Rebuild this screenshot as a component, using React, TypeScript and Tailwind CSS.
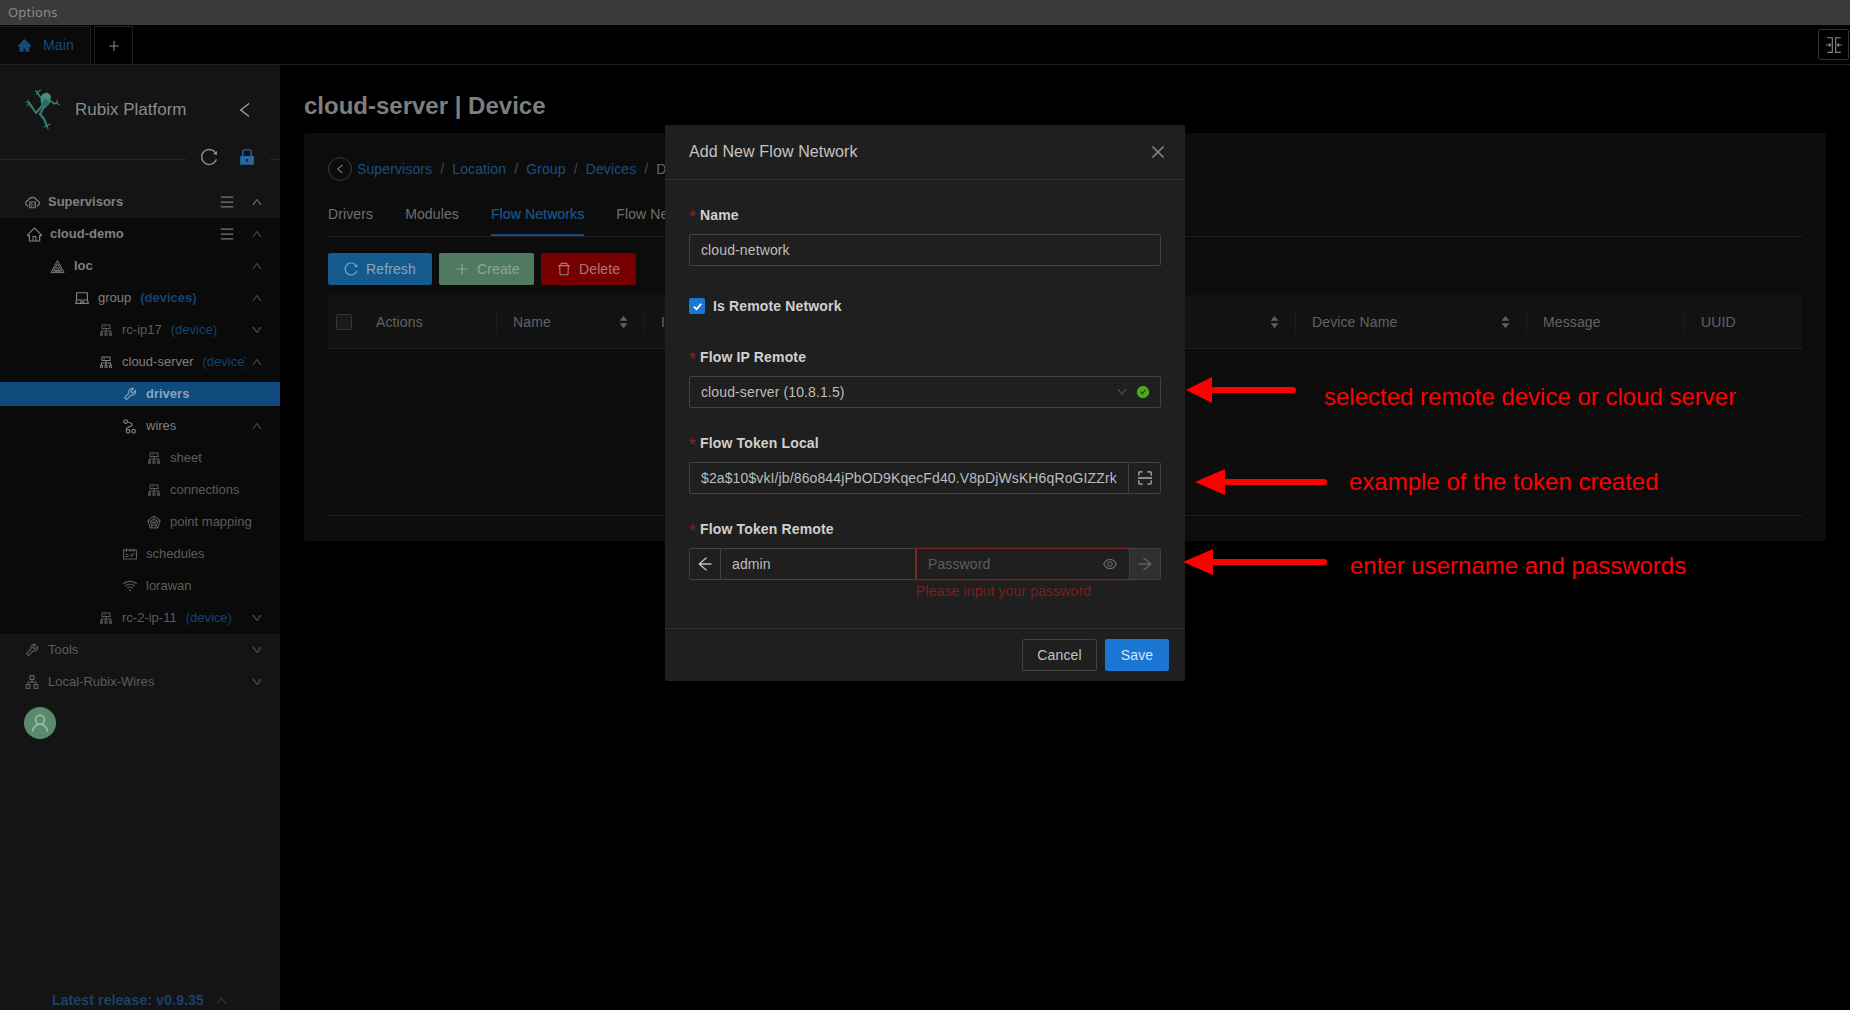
import type { ReactNode } from "react";
import {
  AiFillCheckCircle,
  AiFillHome,
  AiFillLock,
  AiOutlineApartment,
  AiOutlineArrowLeft,
  AiOutlineArrowRight,
  AiOutlineClose,
  AiOutlineCloudServer,
  AiOutlineCluster,
  AiOutlineDelete,
  AiOutlineDown,
  AiOutlineEye,
  AiOutlineHome,
  AiOutlineLaptop,
  AiOutlineLeft,
  AiOutlineMenu,
  AiOutlinePlus,
  AiOutlineRadarChart,
  AiOutlineReload,
  AiOutlineScan,
  AiOutlineSchedule,
  AiOutlineTool,
  AiOutlineUp,
  AiOutlineUser,
  AiOutlineWifi,
} from "react-icons/ai";

const indents: Record<number, string> = {
  [-1]: "pl-[24px]",
  0: "pl-[26px]",
  1: "pl-[50px]",
  2: "pl-[74px]",
  3: "pl-[98px]",
  4: "pl-[122px]",
  5: "pl-[146px]",
};

function FrogLogo() {
  return (
    <svg viewBox="0 0 60 60" className="h-[60px] w-[60px]" fill="#357d74" stroke="#357d74" strokeLinejoin="round" strokeLinecap="round">
      <path d="M27.5 14 L32.5 12.5 L36 16 L35 23 L30.5 28 L26 24 L25.5 18 Z" stroke="none" fill="#42907f" />
      <path d="M30 18 L35 23 L30.5 28 L26 24 Z" stroke="none" fill="#2b6b63" />
      <g fill="none" strokeWidth="1.6">
        <path d="M27 19 L24 15.5 L22.5 11.5" />
        <path d="M20 11 L23 12 L25.5 10 M22.5 11.5 L21.5 14.5" strokeWidth="1.1" />
        <path d="M34.5 20 L39 23.5 L42 23" />
        <path d="M42.5 20 L41.5 23 L44.5 25 M39 24 L42 23" strokeWidth="1.1" />
        <path d="M27 26 L21 33 L17 27 L14 23" strokeWidth="2.2" />
        <path d="M11 22 L14 23 L13 20 M14 23 L12 26" strokeWidth="1.1" />
        <path d="M29 27 L25 34 L29 39 L32 46" strokeWidth="2.2" />
        <path d="M29 47 L32 46 L35 44 M32 46 L33 49" strokeWidth="1.1" />
      </g>
    </svg>
  );
}

function PyramidIcon() {
  return (
    <svg viewBox="0 0 16 16" className="h-[15px] w-[15px]" fill="none" stroke="currentColor" strokeWidth="1">
      <path d="M8 1.5 L15 14.5 H1 Z" />
      <path d="M8 5 L12.5 13 H3.5 Z" />
      <path d="M8 8.5 L10.3 12.5 H5.7 Z" />
    </svg>
  );
}

function WiresIcon() {
  return (
    <svg viewBox="0 0 14 14" className="h-[15px] w-[15px]" fill="none" stroke="currentColor" strokeWidth="1.1">
      <circle cx="3.4" cy="2.4" r="1.7" />
      <circle cx="10.8" cy="11.4" r="1.7" />
      <circle cx="5.6" cy="11.4" r="1.7" />
      <path d="M5 2.8 C9.5 3.2 10.5 5.2 8.6 6.6 C7 7.6 4 7.4 3.6 9.6" />
    </svg>
  );
}

function PanelIcon() {
  return (
    <svg viewBox="0 0 16 16" className="h-[18px] w-[18px]" fill="none" stroke="currentColor" strokeWidth="1">
      <path d="M2 1.5 H6.5 V14.5 H2 M14 1.5 H9.5 V14.5 H14" />
      <path d="M1 8 H5 M3.6 6.6 L5 8 L3.6 9.4 M15 8 H11 M12.4 6.6 L11 8 L12.4 9.4" />
    </svg>
  );
}

function SortCarets() {
  return (
    <svg viewBox="0 0 10 16" className="h-[14px] w-[9px]" fill="#5e5e5e">
      <path d="M5 1 L9.5 6.5 H0.5 Z M5 15 L0.5 9.5 H9.5 Z" />
    </svg>
  );
}

function Arrow({ className, width, head }: { className: string; width: number; head: number }) {
  return (
    <svg viewBox={`0 0 ${width} 26`} width={width} height={26} className={className}>
      <path d={`M0 13 L${head} 0 V26 Z`} fill="#ff0000" />
      <path d={`M${head - 1} 13 H${width - 3}`} stroke="#ff0000" strokeWidth="6" strokeLinecap="round" />
    </svg>
  );
}

interface MenuRowProps {
  depth: number;
  icon: ReactNode;
  label: string;
  tag?: string;
  tagBold?: boolean;
  chevron?: "up" | "down";
  chevronDim?: boolean;
  menu?: boolean;
  bold?: boolean;
  dim?: boolean;
  active?: boolean;
}

function MenuRow({ depth, icon, label, tag, tagBold, chevron, chevronDim, menu, bold, dim, active }: MenuRowProps) {
  const color = active ? "text-[#8ba4bb]" : dim ? "text-[#5c5c5c]" : "text-[#808080]";
  return (
    <div className="flex h-8 items-center">
      <div className={`flex h-6 w-full items-center pr-[17px] ${indents[depth]} ${active ? "bg-[#0e4a7c]" : ""}`}>
        <span className={`flex w-6 shrink-0 items-center text-[16px] ${color}`}>{icon}</span>
        <span className={`flex min-w-0 flex-1 overflow-hidden whitespace-nowrap text-[13px] tracking-normal ${bold ? "font-bold" : ""} ${color}`}>
          {label}
          {tag && <span className={`ml-[9px] text-[#15436d] ${tagBold ? "font-bold" : ""}`}>{tag}</span>}
        </span>
        {menu && <AiOutlineMenu className="mr-[11px] shrink-0 text-[16px] text-[#787878]" />}
        {chevron === "up" && <AiOutlineUp className={`ml-[5px] shrink-0 text-[12px] ${chevronDim ? "text-[#4f4f4f]" : "text-[#808080]"}`} />}
        {chevron === "down" && <AiOutlineDown className="ml-[5px] shrink-0 text-[12px] text-[#5c5c5c]" />}
      </div>
    </div>
  );
}

function Sidebar() {
  return (
    <aside className="flex w-[280px] shrink-0 flex-col overflow-hidden bg-[#141414]">
      <div className="flex h-[78px] items-center pl-[15px] pr-[25px] pt-[11px]">
        <FrogLogo />
        <span className="flex-1 text-[17px] tracking-normal text-[#8a8a8a]">Rubix Platform</span>
        <AiOutlineLeft className="text-[20px] text-[#909090]" />
      </div>
      <div className="flex h-[32px] items-center">
        <div className="h-px w-[186px] bg-[#262626]" />
        <AiOutlineReload className="ml-[13px] -mt-[4px] text-[20px] text-[#8a8a8a]" />
        <AiFillLock className="ml-[18px] -mt-[4px] text-[20px] text-[#2768a0]" />
        <div className="ml-[13px] h-px flex-1 bg-[#262626]" />
      </div>
      <div className="h-[11px]" />
      <MenuRow depth={-1} icon={<AiOutlineCloudServer className="text-[17px]" />} label="Supervisors" bold menu chevron="up" />
      <div className="bg-[#0a0a0a]">
        <MenuRow depth={0} icon={<AiOutlineHome className="text-[17px]" />} label="cloud-demo" bold menu chevron="up" chevronDim />
        <MenuRow depth={1} icon={<PyramidIcon />} label="loc" bold chevron="up" chevronDim />
        <MenuRow depth={2} icon={<AiOutlineLaptop />} label="group" tag="(devices)" tagBold chevron="up" chevronDim />
        <MenuRow depth={3} icon={<AiOutlineCluster />} label="rc-ip17" tag="(device)" dim chevron="down" />
        <MenuRow depth={3} icon={<AiOutlineCluster />} label="cloud-server" tag="(device)" chevron="up" chevronDim />
        <MenuRow depth={4} icon={<AiOutlineTool />} label="drivers" bold active />
        <MenuRow depth={4} icon={<WiresIcon />} label="wires" chevron="up" chevronDim />
        <MenuRow depth={5} icon={<AiOutlineCluster />} label="sheet" dim />
        <MenuRow depth={5} icon={<AiOutlineCluster />} label="connections" dim />
        <MenuRow depth={5} icon={<AiOutlineRadarChart />} label="point mapping" dim />
        <MenuRow depth={4} icon={<AiOutlineSchedule />} label="schedules" dim />
        <MenuRow depth={4} icon={<AiOutlineWifi />} label="lorawan" dim />
        <MenuRow depth={3} icon={<AiOutlineCluster />} label="rc-2-ip-11" tag="(device)" dim chevron="down" />
      </div>
      <MenuRow depth={-1} icon={<AiOutlineTool />} label="Tools" dim chevron="down" />
      <MenuRow depth={-1} icon={<AiOutlineApartment />} label="Local-Rubix-Wires" dim chevron="down" />
      <div className="ml-[24px] mt-[9px] flex h-8 w-8 items-center justify-center self-start rounded-full bg-[#5a8a6c] text-[#9fb9a9]">
        <AiOutlineUser className="text-[22px]" />
      </div>
      <div className="mt-auto flex h-[20px] items-center justify-center gap-[11px] text-[14px] font-bold tracking-[0.15px] text-[#17436b]">
        <span>Latest release: v0.9.35</span>
        <AiOutlineUp className="text-[13px]" />
      </div>
    </aside>
  );
}

function ActionButton({ icon, label, className }: { icon: ReactNode; label: string; className: string }) {
  return (
    <button className={`flex h-8 items-center gap-[7px] rounded-[2px] pl-[15px] text-[14px] ${className}`}>
      {icon}
      {label}
    </button>
  );
}

function TableHead() {
  const th = "flex h-[22px] items-center justify-between border-r border-[#1e1e1e] text-[14px] text-[#626262]";
  return (
    <div className="mt-[10px] flex h-[54px] items-center border-b border-[#1f1f1f] bg-[#121212] pt-[1px]">
      <div className="w-8 pl-2">
        <div className="h-4 w-4 rounded-[2px] border border-[#353535] bg-[#1a1a1a]" />
      </div>
      <div className={`${th} w-[137px] pl-4 text-[#6e6e6e]`}>Actions</div>
      <div className={`${th} w-[148px] pl-4 pr-4 text-[#6e6e6e]`}>
        Name
        <SortCarets />
      </div>
      <div className={`${th} w-[651px] pl-4 pr-4`}>
        Is Remote
        <SortCarets />
      </div>
      <div className={`${th} w-[231px] pl-4 pr-4`}>
        Device Name
        <SortCarets />
      </div>
      <div className={`${th} w-[158px] pl-4`}>Message</div>
      <div className="flex-1 pl-4 text-[14px] text-[#626262]">UUID</div>
    </div>
  );
}

function Main() {
  const crumb = "text-[#1a4f80]";
  const sep = <span className="mx-2 text-[#4a4a4a]">/</span>;
  return (
    <main className="min-w-0 flex-1 pl-[24px] pr-[24px]">
      <h1 className="flex h-[68px] items-center pt-[13px] text-[24px] font-bold tracking-normal text-[#7e7e7e]">cloud-server | Device</h1>
      <section className="h-[408px] rounded-[2px] bg-[#0c0c0c] px-6 pt-6">
        <div className="flex h-6 items-center whitespace-nowrap text-[14px]">
          <span className="mr-[5px] flex h-6 w-6 items-center justify-center rounded-full border border-[#3a3a3a] text-[#8a8a8a]">
            <AiOutlineLeft className="text-[12px]" />
          </span>
          <span className={crumb}>Supervisors</span>
          {sep}
          <span className={crumb}>Location</span>
          {sep}
          <span className={crumb}>Group</span>
          {sep}
          <span className={crumb}>Devices</span>
          {sep}
          <span className="text-[#6a6a6a]">Device</span>
        </div>
        <div className="mt-[13px] flex h-[43px] gap-8 overflow-hidden border-b border-[#1f1f1f] whitespace-nowrap text-[14px] text-[#707070]">
          <span className="pt-[10px]">Drivers</span>
          <span className="pt-[10px]">Modules</span>
          <span className="border-b-2 border-[#174a78] pt-[10px] text-[#1a4f80] [text-shadow:0_0_0.5px_currentcolor]">Flow Networks</span>
          <span className="pt-[10px]">Flow Network Clones</span>
        </div>
        <div className="mt-[16px] flex gap-[7px]">
          <ActionButton icon={<AiOutlineReload className="text-[16px]" />} label="Refresh" className="w-[104px] bg-[#155a8d] text-[#8ba4b8]" />
          <ActionButton icon={<AiOutlinePlus className="text-[16px]" />} label="Create" className="w-[95px] bg-[#507a60] text-[#8fa597]" />
          <ActionButton icon={<AiOutlineDelete className="text-[16px]" />} label="Delete" className="w-[95px] bg-[#760000] text-[#a87a7a]" />
        </div>
        <TableHead />
        <div className="h-[167px] border-b border-[#1f1f1f]" />
      </section>
    </main>
  );
}

function FieldLabel({ children }: { children: ReactNode }) {
  return (
    <div className="flex h-[22px] items-center text-[14px] font-bold tracking-[0.15px] text-[#d0d0d0]">
      <span className="mt-[4px] w-[11px] text-[18px] font-normal leading-none text-[#8a2222]">*</span>
      {children}
    </div>
  );
}

function AddNetworkModal() {
  const box = "flex h-8 items-center border border-[#424242] bg-[#1f1f1f] text-[14px]";
  return (
    <div className="absolute left-[665px] top-[125px] flex h-[556px] w-[520px] flex-col rounded-[2px] bg-[#1f1f1f]">
      <div className="flex h-[55px] shrink-0 items-center justify-between border-b border-[#303030] pl-6 pr-[18px] text-[16px] text-[#c4c4c4]">
        Add New Flow Network
        <AiOutlineClose className="text-[18px] text-[#8a8a8a]" />
      </div>
      <div className="flex-1 px-6 pt-[24px]">
        <FieldLabel>Name</FieldLabel>
        <div className={`${box} mt-[8px] rounded-[2px] px-[11px] text-[#bdbdbd]`}>cloud-network</div>

        <div className="mt-[32px] flex h-4 items-center gap-2 text-[14px] font-bold tracking-[0.15px] text-[#d0d0d0]">
          <span className="flex h-4 w-4 items-center justify-center rounded-[2px] bg-[#1976d2]">
            <svg viewBox="0 0 12 12" className="h-[11px] w-[11px]" fill="none" stroke="#fff" strokeWidth="2">
              <path d="M2 6.2 L5 9 L10 3" />
            </svg>
          </span>
          Is Remote Network
        </div>

        <div className="mt-[32px]">
          <FieldLabel>Flow IP Remote</FieldLabel>
        </div>
        <div className={`${box} mt-[8px] justify-between rounded-[2px] pl-[11px] pr-[10px] text-[#bdbdbd]`}>
          cloud-server (10.8.1.5)
          <span className="flex items-center gap-[8px]">
            <AiOutlineDown className="text-[12px] text-[#5c5c5c]" />
            <AiFillCheckCircle className="text-[14px] text-[#49aa19]" />
          </span>
        </div>

        <div className="mt-[24px]">
          <FieldLabel>Flow Token Local</FieldLabel>
        </div>
        <div className="mt-[8px] flex">
          <div className={`${box} min-w-0 flex-1 overflow-hidden whitespace-nowrap rounded-l-[2px] px-[11px] text-[#bdbdbd]`}>
            $2a$10$vkI/jb/86o844jPbOD9KqecFd40.V8pDjWsKH6qRoGIZZrk
          </div>
          <div className={`${box} w-[32px] justify-center rounded-r-[2px] border-l-0 text-[#b0b0b0]`}>
            <AiOutlineScan className="text-[18px]" />
          </div>
        </div>

        <div className="mt-[24px]">
          <FieldLabel>Flow Token Remote</FieldLabel>
        </div>
        <div className="mt-[8px] flex">
          <div className={`${box} w-8 justify-center rounded-l-[2px] text-[#c0c0c0]`}>
            <AiOutlineArrowLeft className="text-[18px]" />
          </div>
          <div className={`${box} w-[195px] border-l-0 px-[11px] text-[#bdbdbd]`}>admin</div>
          <div className="flex w-[214px] flex-col">
            <div className="flex h-8 items-center justify-between border border-[#7a2424] bg-[#1f1f1f] pl-[11px] pr-[11px] text-[14px] text-[#5e5e5e] shadow-[0_0_0_1px_rgba(122,36,36,0.3)]">
              Password
              <AiOutlineEye className="text-[16px] text-[#6c6c6c]" />
            </div>
            <div className="h-[22px] text-[14px] leading-[22px] text-[#7a2020]">Please input your password</div>
          </div>
          <div className={`${box} w-[31px] justify-center rounded-r-[2px] border-l-0 !bg-[#303030] text-[#626262]`}>
            <AiOutlineArrowRight className="text-[18px]" />
          </div>
        </div>
      </div>
      <div className="flex h-[53px] shrink-0 items-start justify-end gap-2 border-t border-[#303030] pr-4 pt-[10px] text-[14px]">
        <button className="h-8 w-[75px] rounded-[2px] border border-[#424242] text-[#c4c4c4]">Cancel</button>
        <button className="h-8 w-[64px] rounded-[2px] bg-[#1976d2] text-[#d8e6f4]">Save</button>
      </div>
    </div>
  );
}

function Annotations() {
  const note = "absolute whitespace-nowrap text-[24px] leading-[28px] tracking-normal text-[#ff0000]";
  return (
    <>
      <Arrow className="absolute left-[1186px] top-[377px]" width={110} head={26} />
      <span className={`${note} left-[1324px] top-[383px]`}>selected remote device or cloud server</span>
      <Arrow className="absolute left-[1195px] top-[469px]" width={132} head={30} />
      <span className={`${note} left-[1349px] top-[468px]`}>example of the token created</span>
      <Arrow className="absolute left-[1183px] top-[549px]" width={144} head={30} />
      <span className={`${note} left-[1350px] top-[552px]`}>enter username and passwords</span>
    </>
  );
}

export default function App() {
  return (
    <div className="relative flex h-[1010px] w-[1850px] flex-col overflow-hidden bg-black tracking-[0.12px] [font-family:Liberation_Sans,Arial,sans-serif]">
      <div className="flex h-[25px] shrink-0 items-center bg-[#3a3a3a] pl-2 text-[13px] tracking-[0.2px] text-[#8a8a8a] [font-family:Noto_Sans,sans-serif]">Options</div>
      <div className="flex h-[40px] shrink-0 items-end gap-[3px] border-b border-[#222]">
        <div className="flex h-[38px] w-[91px] items-center gap-[11px] border-r border-t border-[#1f1f1f] bg-[#0a0a0a] pl-[17px] text-[14px] text-[#174a78]">
          <AiFillHome className="text-[15px]" />
          Main
        </div>
        <div className="flex h-[38px] w-[39px] items-center justify-center border-x border-t border-[#1f1f1f] text-[#8a8a8a]">
          <AiOutlinePlus className="text-[14px]" />
        </div>
        <div className="mb-[4px] ml-auto mr-[1px] flex h-[31px] w-[31px] items-center justify-center self-end rounded-[2px] border border-[#333] text-[#8a8a8a]">
          <PanelIcon />
        </div>
      </div>
      <div className="flex min-h-0 flex-1">
        <Sidebar />
        <Main />
      </div>
      <AddNetworkModal />
      <Annotations />
    </div>
  );
}
